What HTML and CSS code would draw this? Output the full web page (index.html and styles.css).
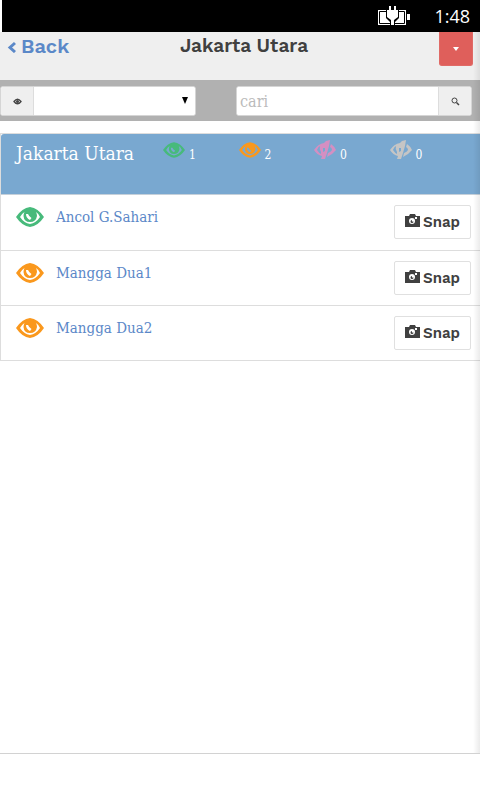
FILE: index.html
```html
<!DOCTYPE html>
<html lang="id">
<head>
<meta charset="utf-8">
<meta name="viewport" content="width=device-width, initial-scale=1">
<title>Jakarta Utara</title>
<link rel="stylesheet" href="styles.css">
</head>
<body>
<svg class="defs" aria-hidden="true">
  <symbol id="eye" viewBox="0 0 28 20">
    <path fill-rule="evenodd" d="M0 10Q6 1 14 0Q22 1 28 10Q22 19 14 20Q6 19 0 10ZM4 10Q8 16 14 17Q20 16 24 10Q22.500 6.500 20 5Q21 7 21 9Q20 15 14 15Q8 15 7.500 9Q7.500 7 8.500 5Q6 6.500 4 10ZM10 7Q10 11 14 13L15.500 11Q13 9.500 12 7Z"/>
  </symbol>
  <symbol id="eye-off" viewBox="0 0 22 20">
    <path d="M0 10Q4 4 10 3L12 1L16 0L15 6L13 13L11 19L7 19L8 16Q3 15 0 10ZM3 10Q5 13 7 14L7 12Q5 9 6 6Q4 7 3 10ZM9 8V12L11 11L11 8Z" fill-rule="evenodd"/>
    <path d="M17 4Q20 6 22 10Q18 15 13 17L14 13Q17 12 18 10Q18 8 16 7Z"/>
  </symbol>
  <symbol id="camera" viewBox="0 0 15 13">
    <path fill-rule="evenodd" d="M0 2H4L5 0H10L11 2H15V13H0ZM7 4A3 3 0 1 0 7 10A3 3 0 1 0 7 4ZM10 3V5H12V3Z"/>
    <path d="M7 6A1.500 1.500 0 1 0 8.500 7.500H7Z"/>
  </symbol>
</svg>
<div class="status">
  <svg width="32" height="20" viewBox="0 0 32 20" aria-hidden="true">
    <path d="M0 4H28V19H0ZM29 8H32V14H29Z" fill="#fff"/>
    <path d="M1.500 5.500H26.500V17.500H1.500Z" fill="none" stroke="#000"/>
    <path d="M8 3H21V12L17 16V19H12V16L8 12Z" fill="#000"/>
    <path d="M11 0H13V4H16V0H18V4H20V11L16 14V19H13V14L9 11V4H11Z" fill="#fff"/>
  </svg>
  <time>1:48</time>
</div>
<div class="page">
  <header class="bar">
    <a class="back" href="#"><svg class="line" width="9" height="13" viewBox="0 0 9 13" aria-hidden="true"><path d="M8 3L3 7.500L8 12" stroke="currentColor" stroke-width="3"/></svg>Back</a>
    <h1>Jakarta Utara</h1>
    <button class="menu" aria-label="Menu"><svg width="6" height="4" viewBox="0 0 6 4" aria-hidden="true"><path d="M0 0H6L3 4Z" fill="#fff"/></svg></button>
  </header>
  <form class="filters">
    <div class="group pick">
      <label class="addon" for="view" aria-label="Status"><svg width="9" height="7" viewBox="0 0 9 7" aria-hidden="true"><path d="M1 3.500Q4.500 -1 8 3.500Q4.500 8 1 3.500Z" fill="none" stroke="#444" stroke-width="1.300"/><circle cx="4.500" cy="3.500" r="1.500" fill="#444"/></svg></label>
      <select id="view"><option></option></select>
    </div>
    <div class="group search">
      <input type="text" placeholder="cari" aria-label="cari">
      <button class="addon" type="button" aria-label="Cari"><svg class="line" width="9" height="9" viewBox="0 0 9 9" stroke="#444" aria-hidden="true"><circle cx="3.500" cy="3.500" r="2.500"/><path d="M5.500 5.500L8 8" stroke-width="1.500"/></svg></button>
    </div>
  </form>
  <main class="panel">
    <div class="summary">
      <h2>Jakarta Utara</h2>
      <span class="count green"><svg><use href="#eye"/></svg><b>1</b></span>
      <span class="count orange"><svg><use href="#eye"/></svg><b>2</b></span>
      <span class="count pink"><svg><use href="#eye-off"/></svg><b>0</b></span>
      <span class="count grey"><svg><use href="#eye-off"/></svg><b>0</b></span>
    </div>
    <ul>
      <li class="green"><svg class="big"><use href="#eye"/></svg><a href="#">Ancol G.Sahari</a><button class="snap"><svg><use href="#camera"/></svg>Snap</button></li>
      <li class="orange"><svg class="big"><use href="#eye"/></svg><a href="#">Mangga Dua1</a><button class="snap"><svg><use href="#camera"/></svg>Snap</button></li>
      <li class="orange"><svg class="big"><use href="#eye"/></svg><a href="#">Mangga Dua2</a><button class="snap"><svg><use href="#camera"/></svg>Snap</button></li>
    </ul>
  </main>
</div>
</body>
</html>
```
FILE: styles.css
```css
* { box-sizing: border-box; }
body {
  margin: 0;
  min-height: 100vh;
  display: flex;
  flex-direction: column;
  padding-bottom: 46px;
  background: #fff;
  color: #404040;
  font-family: "DejaVu Serif Condensed", "DejaVu Serif", serif;
  font-size: 15px;
}
a { color: #5b88c8; text-decoration: none; }
button { padding: 0; cursor: pointer; }
svg { fill: currentColor; flex: none; }
.line { fill: none; }
.defs { position: absolute; width: 0; height: 0; }
.status {
  height: 32px;
  margin-left: 2px;
  padding-right: 10px;
  display: flex;
  justify-content: flex-end;
  align-items: center;
  gap: 24px;
  background: #000;
  color: #fff;
  font: 18px/32px "Open Sans", sans-serif;
}
.page {
  position: relative;
  flex: 1;
  border-bottom: 1px solid #d2d2d2;
}
.page::after {
  content: "";
  position: absolute;
  inset: 0 0 0 auto;
  width: 7px;
  background: linear-gradient(to right, rgba(0, 0, 0, 0), rgba(0, 0, 0, .08));
  pointer-events: none;
}
.bar {
  display: grid;
  grid-template-columns: 1fr auto 1fr;
  align-items: start;
  height: 48px;
  padding: 0 7px;
  background: #efefef;
  font: 600 20px/28px "Work Sans", Inter, sans-serif;
}
.bar h1 {
  margin: 0;
  padding-left: 8px;
  font-size: 19px;
  font-weight: 600;
  line-height: 28px;
}
.back { display: flex; align-items: center; gap: 5px; }
.menu {
  justify-self: end;
  width: 34px;
  height: 34px;
  display: flex;
  align-items: center;
  justify-content: center;
  border: 1px solid #e06a66;
  border-top: 0;
  border-radius: 0 0 3px 3px;
  background: #df5f5b;
}
.filters {
  display: flex;
  justify-content: space-between;
  height: 41px;
  padding: 6px 8px 5px 0;
  background: #b1b1b1;
}
.group {
  display: flex;
  border: 1px solid #d5d5d5;
  border-radius: 3px;
  background: #fff;
  overflow: hidden;
}
.pick { position: relative; width: 41.500%; }
.pick::after {
  content: "";
  position: absolute;
  right: 7px;
  top: 10px;
  border: solid transparent;
  border-width: 7px 3px 0;
  border-top-color: #000;
  pointer-events: none;
}
.search { width: 50%; }
.addon {
  width: 33px;
  display: flex;
  align-items: center;
  justify-content: center;
  border: 0;
  background: #efefef;
}
.pick .addon { border-right: 1px solid #ddd; }
.search .addon { border-left: 1px solid #ddd; }
select, input {
  flex: 1;
  min-width: 0;
  border: 0;
  background: #fff;
  font: inherit;
  font-size: 16px;
}
select { appearance: none; padding: 0 20px 0 4px; }
input { padding: 0 3px; }
input::placeholder { color: #bbb; opacity: 1; }
.panel {
  margin-top: 12px;
  border: solid #ddd;
  border-width: 1px 0 0 1px;
}
.summary {
  display: flex;
  height: 61px;
  padding: 6px 15px;
  border-bottom: 1px solid #c5d0da;
  border-radius: 3px 0 0;
  background: #79a8d0;
}
.summary h2 {
  width: 148px;
  margin: 0;
  color: #fff;
  font-size: 19px;
  font-weight: 400;
  line-height: 26px;
  white-space: nowrap;
}
.count { display: flex; width: 76px; gap: 4px; }
.count svg { width: 22px; height: 20px; }
.count b { color: #fff; font-size: 12px; font-weight: 400; line-height: 30px; }
.green { color: #47ba7b; }
.orange { color: #fa981d; }
.pink { color: #d48fc2; }
.grey { color: #c5c5c5; }
ul { margin: 0; padding: 0; list-style: none; }
li {
  display: flex;
  align-items: flex-start;
  height: 55px;
  padding: 10px 9px 0 15px;
  border-bottom: 1px solid #ddd;
}
li:first-child { height: 56px; }
.big { width: 28px; height: 20px; margin: 2px 12px 0 0; }
li a { flex: 1; line-height: 24px; }
.snap {
  display: flex;
  align-items: center;
  justify-content: center;
  gap: 3px;
  width: 77px;
  height: 34px;
  border: 1px solid #e0e0e0;
  border-radius: 2px;
  background: #fff;
  color: #404040;
  font: 600 15px/32px "Work Sans", Inter, sans-serif;
}
.snap svg { width: 15px; height: 13px; margin-bottom: 3px; }
```
